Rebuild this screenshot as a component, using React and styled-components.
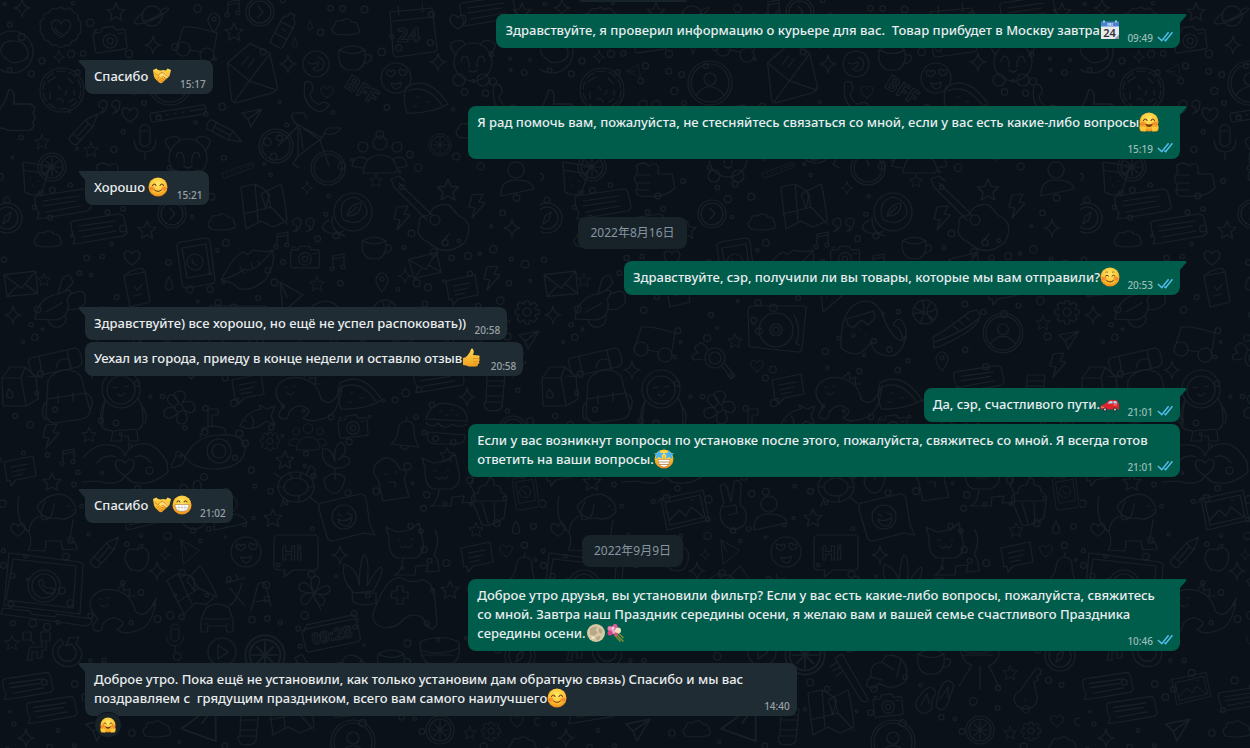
import styled, { createGlobalStyle, css } from 'styled-components';

const GlobalStyle = createGlobalStyle`
  body {
    margin: 0;
    background: #0a1118;
  }
`;

/* ---------- wallpaper ---------- */

const doodleShapes = {
  star: <path d="M0-9 2.6-3 9-2.5 4.2 1.8 5.6 8.3 0 5-5.6 8.3-4.2 1.8-9-2.5-2.6-3Z" />,
  sparkle: <path d="M0-9Q1-1 8 0 1 1 0 9-1 1-8 0-1-1 0-9Z" />,
  heart: <path d="M0 7C-12 0-8-8-3.500-7-1-6.500 0-4 0-4S1-6.500 3.500-7C8-8 12 0 0 7Z" />,
  drop: <path d="M0-7Q-7 5 0 6 7 5 0-7Z" />,
  badge: (
    <>
      <path d="M0-21q4 4 7 1 4 0 6 5 5 0 4 6 5 3 2 8 3 5-2 8 0 6-6 6-2 6-7 4-4 5-8 0-6 2-8-4-6 0-6-6-5-3-2-8-3-5 2-8 0-6 6-6 2-6 8-4 1-1 4-2Z" />
      <path d="M0 9C-15 0-9-9-4-8-1-7 0-4 0-4S1-7 4-8C9-9 15 0 0 9ZM-6 0q2 5 7 6" />
    </>
  ),
  saturn: (
    <>
      <circle r="10" />
      <path d="M-9-3C-27 10-14 10 0 4 15-2 24-13 9-6M-8 5Q2 3 9-3" />
    </>
  ),
  camera: (
    <>
      <path d="M-14-9h6l2-4H5l2 4h7q2 0 2 2V9q0 2-2 2h-28q-2 0-2-2V-7q0-2 2-2Z" />
      <circle r="7" cy="1" /><circle r="3" cy="1" /><path d="M9-5h4M-14-10v-2h3" />
    </>
  ),
  helmet: (
    <>
      <circle r="21" /><path d="M-4 8Q-13 2-11-4-9-12 2-11 14-11 16 0 17 8 7 10-1 12-4 8Z" />
    </>
  ),
  pin: <path d="M0 10Q-7 1-6-3-4-9 0-9T6-3Q7 1 0 10ZM0-5a2 2 0 1 0 .1 0Z" />,
  music: <path d="M-5 5V-6L6-8V3M-5-3 6-5M-7 5a2 2 0 1 0 2 0ZM4 3a2 2 0 1 0 2 0Z" />,
  clock: (
    <>
      <circle r="14" /><circle r="11" /><path d="M-2-6 3 0-2 5" />
    </>
  ),
  bottle: <path d="M-7-8Q-7-13-3-14V-18H3v4Q7-13 7-8V15Q7 18 4 18H-4Q-7 18-7 15ZM-7-6H7M-7 7H7M-2 0h4" />,
  cloud: <path d="M-11 7Q-17 2-11-2-11-8-4-6 1-11 6-5 12-5 12 0 16 6 9 7 0 9-11 7Z" />,
  calendar: (
    <>
      <path d="M-22-18 20-22 25 18Q25 22 20 22L-15 27Q-19 27-19 22ZM-14-24l1 9M10-27l1 9M-19-9 22-13" />
      <text x="-15" y="12">24</text>
    </>
  ),
  cup: <path d="M-14-8q14-8 26 0-12 7-26 0Q-16 9-5 12H4Q14 8 12-8M12-3Q20-5 18 2 15 6 10 5" />,
  glasses: <path d="M-14 0a7 7 0 1 0 .1 0ZM10 6a7 7 0 1 0 .1 0ZM-20 5-14-14Q-10-18 20-9L17 8M-8 8 4 10" />,
  letter: <path d="M-19-12 6-28 24-16 27 18Q26 24 20 24L-16 29Q-21 28-20 23ZM-19-12 0 9 24-15M0 9-18 28M0 9 26 22M-5-8 3-16M1-5 8-12" />,
  moon: (
    <>
      <circle r="13" /><path d="M2-7Q11-4 6 5 0 9-3 5 4 2 2-2-5 2-8-2" />
    </>
  ),
  heartFace: (
    <>
      <circle r="15" /><path d="M-5-1q-7-3-4-7 3 0 4 2 2-3 4-1 1 3-4 6ZM6-2q-5-4-2-7 3 0 3 2 3-2 4 0 0 4-5 5ZM-5 5q5 2 10-1 0 7-5 7-4-1-5-6Z" />
    </>
  ),
  phone: <path d="M-11-15Q-3-18-3-7-8-4-4 2T4 7Q8 3 13 8 8 16 1 14-15 7-11-15Z" />,
  bff: <text x="-22" y="0" transform="rotate(32)">BFF</text>,
  hi: (
    <>
      <path d="M-17-18H18Q22-18 22-14V13Q22 17 18 17H-3L-12 24-11 17H-17Q-22 17-22 13V-14Q-22-18-17-18Z" />
      <text x="-15" y="7">Hi</text>
    </>
  ),
  cookie: (
    <>
      <circle r="22" /><path d="M-14-8q5-4 8-5M6-12l5 5M-12 2v7M-4-4l3 4M5 0l-2 5M12 0v5M-5 10q4-4 6 2M7 12l5-3" />
      <circle r="19" strokeDasharray="8 4" />
    </>
  ),
  quotes: <path d="M-3-4q-5-4-8 1-1 5 4 5 0 5-4 6 8-1 8-12ZM10-4q-5-4-8 1-1 5 4 5 0 5-4 6 8-1 8-12Z" />,
  bar: <path d="M-26-4H26Q28-4 28 0T26 5H-26Q-28 5-28 0T-26-4ZM-20 0h2M-12 0h2M-4 0h2M4 0h2M12 0H26" />,
  pencil: <path d="M-5 17V-8L0-20 5-8V17Q0 20-5 17ZM-5-8Q0-6 5-8M-5 11H5M0-6V9" />,
  mic: <path d="M-5-13q5-7 10 0V2Q0 9-5 2ZM-11-1q1 12 11 12T11-1M0 11v8M-3-10h6" />,
  plane: <path d="M-10-5 10-9-1 9-4 1ZM-4 1 10-9" />,
  bike: (
    <>
      <circle cx="-24" cy="-2" r="17" /><circle cx="-24" cy="-2" r="14" />
      <circle cx="28" cy="20" r="17" /><circle cx="28" cy="20" r="14" />
      <path d="M-22-2-2-22Q-13-34-5-35 6-37 6-30M-2-24-2 8 22-10-3-24M3-20 20-8 29 18M22-10 27-20h14q-4 8-16 6M-2 8l-5 8 6 4M3 1 0-20" />
    </>
  ),
  people: (
    <>
      <circle r="7" cy="-12" /><circle r="5" cx="-17" cy="-8" /><circle r="5" cx="17" cy="-8" />
      <path d="M-17 18Q-15 0 0 0T17 15L15 18ZM-13 4Q-25-2-28 11L-18 13M13 4Q25-2 27 11L18 13" />
    </>
  ),
  person: <path d="M0-18a8 8 0 1 0 .1 0ZM-15 16Q-16 0 0 0T18 9Z" />,
  glass: <path d="M-11-14 16-10 8 16Q0 22-9 16ZM-11-6 14-2M-4 2h1M4 5h1M-2 10h1" />,
  citrus: (
    <>
      <circle r="14" /><circle r="11" /><path d="M0-9V9M-9 0H9M-6-6 6 6M6-6-6 6" />
    </>
  ),
  thumb: <path d="M-15 1q6-6 9-18 6 0 4 12H12q6 3 2 8 4 4 0 7 2 5-3 7H-6q-4-2-9-2Z" />,
  fist: <path d="M-17-12q7-6 13 0 5-5 9 0L5-4h14L22 10Q12 20-4 18-17 20-17 12-14 9-17 5T-17-3-17-12ZM-17-3H-3M-17 5H-3M-16 12H-4" />,
  panda: (
    <>
      <circle r="19" cy="2" /><path d="M-17-5q-11-12 0-14 8-2 9 4M17-5q10-12 0-14-8-2-9 4M-12 2q1-8 6-5 3 6 2 10M12 2q-1-8-6-5-3 6-2 10M-4 10q4 4 8 0" />
      <circle cx="-14" cy="20" r="6" /><circle cx="10" cy="20" r="6" />
    </>
  ),
  map: <path d="M-22-17-8-20 4-13 18-20Q22-5 24 17L10 23-2 17-17 25Q-20 4-22-17ZM-8-20-5 17M4-13 8 4M-20 10 8 3 24 20M0-5a4 4 0 1 1 5 0L3 5Z" />,
  flower: (
    <>
      <path d="M0-5Q-10-16 1-17 11-15 3-5 15-10 16 0 14 8 5 2 12 14 3 16-5 16-1 5-12 15-15 6-16-2-4 0-16-8-9-13-3-14 0-5Z" /><circle r="4" />
    </>
  ),
  rose: (
    <>
      <circle r="19" /><path d="M-11 4Q-15-11 0-15 14-12 14 2 8 12-3 10-12 8-11 4ZM-6 4Q-4-8 8-9 8 4-6 4ZM-6 4 4-5M-21 5Q-22 20-8 24M-24 8q-12 7-2 12 10 4 16-1" />
    </>
  ),
  guitar: <path d="M-39-29-6 4M-34-33-1-1M-39-29-42-37-34-40-28-35M-14 10Q-15-2-5 0 2-14 16-11 23-3 26 0 42 7 32 26 13 43-5 26-18 20-14 10M2 9a5 5 0 1 1 .1 0ZM9 26l7-8" />,
  bolt: <path d="M-5-11 6-12 2-4 8-3-5 12-2 2-8 1Z" />,
  compass: (
    <>
      <circle r="15" /><circle r="11" /><circle r="3" cy="-18" /><path d="M4-6 2 2-4 6-2-2Z" />
    </>
  ),
  lines: <path d="M-25-9 21-16Q25-16 26-12L29 1Q29 5 25 6L-17 13-25 14-23 8Q-26 5-27-5-28-8-25-9ZM-19-4 17-9M-19 1 14-4M-16 7 18 1" />,
  mobile: (
    <>
      <path d="M-14-20 10-24Q14-24 15-20L20 18Q20 22 16 22L-8 26Q-12 26-13 22L-18-16Q-18-19-14-20ZM-13-14 11-18 15 12-8 16Z" /><circle r="8" /><path d="M-3-3q0 5 5 6" />
    </>
  ),
  lips: <path d="M-27 10Q-12-18-4-18 0-13 5-20 18-17 25-20 28-5 17 10 2 23-10 18-15 12-27 10ZM-27 10Q-12 6-4-1 5 5 25-20M-8-3-4 3M3-7l2 6M10-9l2 4" />,
  envelope: <path d="M-17-6 14-14 19 8-11 15ZM-17-6 2 5 14-14M-11 15-2 3M19 8 5 0" />,
  rocket: <path d="M-23 14Q-20-8 0-11L10-15Q16-13 9-6 14 11-2 15ZM-12 7 4-2M0-11 4-26Q12-35 15-22L7-14M11-10Q30-20 27-2 20 7 9 4M-10 15a9 9 0 1 0 18-4" />,
  card: <path d="M-12-14 9-18 14 12-6 17ZM-12-14Q-6-20 6-22L9-18M-2-4 1 0 6-5M-2 6 6 4" />,
  triangle: <path d="M-11-15 12-2-8 15ZM-11-15-4 0" />,
  backpack: <path d="M-18-13Q-11-25 2-24 16-23 17-10L24 16Q23 24 16 25L-12 29Q-18 28-20 22ZM-19 5 20-1M-8 1v8M7-1v8M-19 8q-7 4-3 17h5M20-1q9 4 5 16M-10-26q2-12 13-8l2 9" />,
  bedroll: <path d="M-24-2 20-12Q25-12 27 1 27 5 23 7L-20 16Q-24 14-26 4-27-2-24-2ZM-16-4-13 13M12-9l4 17" />,
  milk: <path d="M-15-7-7-18H8L19-8 21 14 9 21H-14ZM-15-7H4L9 20M4-7 8-18M-8 4q-5 9 1 9 7-1-1-9ZM10-9l10 1" />,
  astronaut: (
    <>
      <circle r="19" cy="-11" /><circle r="14" cy="-10" />
      <path d="M-8-12l5-1M3-13l5-1M-3-6q4 4 7-1M-16 0-20 26Q-15 31-8 31L18 29Q24 27 21 6L17-2M-17 3q-6 12-1 22M20 5q8 9 4 19M-8 31l-2 10h10l1-5h6l1 5h9l-1-10" />
    </>
  ),
  submarine: (
    <>
      <path d="M-31 6Q-20-16 4-16 31-18 29 1 24 18-3 18-22 18-31 6ZM-31 6q-10-12-9 0-9 13 0 10 9-2 9-10ZM-16-14-13-23Q0-27 9-22L10-16M-8-24v-18h10v6h-6v12" />
      <circle r="12" cx="3" /><circle r="7" cx="3" />
    </>
  ),
  fish: <path d="M-17 8Q-10-7 4-9L2-13 10-9 18-12 14-2 18 7 9 3Q-4 15-17 8ZM-12 3h2M-6-2Q-1 3-5 9" />,
  note: <path d="M-16-9 13-15 16 5-4 9-9 15-10 9-13 10ZM-9-4 8-7M-8 1 6-2M-7 5 3 3" />,
  dino: <path d="M-24 15Q-37 2-29-8-19-18-4-13 10-9 13 7 24 18 34-6 31 24 14 27 2 31-5 26 5 19-2 16-10 10-19 20-20 31-29 25-30 20-24 15ZM-23-5h2M-15-6h2M-21 1q4 4 7-1M-4-15l5-5 1 7 6-2-1 7 6 0" />,
  pizza: <path d="M-20-11Q2-24 22 6 5 16-19 15-24 0-20-11ZM-18-7Q0-15 16 7M-9-1h2M0 4h3M-12 8h3" />,
  gear: (
    <>
      <path d="M-2-11h4l1 4 4-3 3 3-2 4 4 1v4l-4 1 2 4-3 3-4-2-1 4h-4l-1-4-4 2-3-3 2-4-4-1v-4l4-1-2-4 3-3 4 2Z" /><circle r="4" />
    </>
  ),
  bell: <path d="M-14 8Q-8 3-7-5-6-15 2-15 10-14 9-5 9 3 14 11ZM-5 9q4 9 9 1M1-15l1-4" />,
  hands: <path d="M-42-8Q-34-19-23-21-4-23 0-10 5-24 24-22 35-17 42-4L43 6Q27 21 7 16-1 10 0 10-6 21-29 15L-43 16M0 10Q-12 3-9-5-4-8 0-3 6-10 9-4 10 4 0 10ZM-28-3Q-20-13-9-9M26-3Q19-13 10-9" />,
  turtle: (
    <>
      <ellipse rx="18" ry="15" /><ellipse rx="12" ry="9" /><path d="M-15-9-22-14M10-12 14-21Q22-20 17-9M14 10l7 6M-12 11-15 19M-4-9-7-15M4-9 5-15M12 0h6M-12 0h-6M3 9v6" />
    </>
  ),
  plant: <path d="M0 6Q-15 2-12-14-2-13 0 0-2-16 6-20 16-12 3-2M3-2Q13-10 15 0 10 7 0 6V18M-11 17Q0 7 10 16 7 32-2 31-11 28-11 17Z" />,
  toast: <path d="M-12-17Q0-28 10-10 20-9 14 0L19 18-7 22-12 0Q-21-8-12-17ZM-5-5h2M5-7h2M-2 3h7v5" />,
  burger: <path d="M-21-5Q-15-24 3-20 21-17 20-3ZM-21-1q7 6 12 0 7 8 14 1 7 5 15 0M-19 8l37 3M-19 8Q-22 20-10 20H8Q19 20 18 11M-7-13h2M4-14h2M9-9h2M-1-9h2" />,
  sock: <path d="M-8-18H10L7 13Q5 20-8 17Q-13 12-9 8ZM-8-12H9M-8-7H9M-9 3H8M-10 9H7" />,
  turntable: (
    <>
      <path d="M-24-24H28Q31-24 30-20L26 18Q26 22 22 22L-24 17Q-28 17-27 13L-28-19Q-28-24-24-24Z" /><circle r="17" /><circle r="6" /><circle r="3" /><path d="M18-15q8 16 2 28l3 2M-23-12h2M-23-5h2" />
    </>
  ),
  magnifier: (
    <>
      <circle r="10" /><circle r="6" /><path d="M7 8 16 21 20 18 10 6M-7-8q-6-11-10-5-6 1 0 8-9 2-4 7l8-1" />
    </>
  ),
  ghost: <path d="M-22 28Q-23-5-9-15 8-25 18-9 28 20 40 21 39 8 30 5 37-8 43 9 44 28 30 36 10 36 8 22-4 42-22 28ZM-17-1 11-9 12-2 5 5-1 0-5 3-10 8-15 5ZM-4 10h1M2 14h1" />,
  ball: (
    <>
      <circle r="12" /><path d="M-11-5Q0 4 11-3M-3-12Q2 0-5 11M6-10Q-2 0 7 9M-12 2Q0-2 9 8" />
    </>
  ),
  shoe: <path d="M-24 9Q-12 3 12-16L20-18 23-12Q22 1-16 18L-23 20ZM-22 14Q10 2 22-10M-4-2l5 4M2-7l5 4M8-12l4 4" />,
  user: (
    <>
      <circle r="22" /><circle r="19" /><circle r="6" cy="-4" /><path d="M-14 12Q0-5 14 12" />
    </>
  ),
  dog: <path d="M-18-14Q-4-29 9-25 21-20 21-8 12 2 1-2-14 0-18-14ZM-10-18Q-17-5-12 0-3 0-2-10L-1-16M13-14h2M17-10h2M-16-4Q-25 0-26 12-22 24-27 30L-10 31-9 21H6L8 30 22 29Q22 22 15 20L18 0M-26 12Q-41 1-36-24" />,
  apple: <path d="M0-8Q-12-12-12 1-8 14-2 12 4 15 9 8 15-6 7-10 3-10 0-8ZM0-8Q2-14 6-14 6-10 0-8" />,
  laugh: (
    <>
      <path d="M-25-17 14-26Q19-26 20-21L24 5 29 15 18 13-13 21Q-18 21-19 17L-27-11Q-28-16-25-17Z" /><circle r="12" cx="-2" cy="-3" /><path d="M-8-6l4 2M1-7l5 2M-8-1q7 4 14-2-1 10-7 9-6-1-7-7Z" />
    </>
  ),
  cat: <path d="M-17-12-20-22-9-17 4-19 13-26 16-12Q21 4 9 9H-9Q-18 5-17-12ZM-8-9h2M5-10h2M-6-3q3 4 6 0 3 4 6-1M-3 10Q-5 25-12 26H9L10 17 22 16 20 23 33 22Q32 8 28 6 35-9 29-19" />,
  leaves: <path d="M-12 15Q-25 2-22-14-8-9-7 7-6-18-2-23 4-20 1 8 10-9 15-11 19-7 7 13L-12 15ZM-14 15H10V25Q-2 29-13 24Z" />,
  laptop: (
    <>
      <path d="M-35-39 36-30Q40-29 39-25L36 22-40 13ZM-31-33 32-26 29 16-38 8ZM-41 16-14 19-13 22 11 25 13 22 48 27Q48 33 42 34L-43 22Z" />
      <circle r="16" cy="-6" /><circle r="12" cy="-6" /><path d="M-5-11q3-3 5 2-3 4 5 5 6-1 5 4-5 4-11-2-5-5-4-9Z" />
    </>
  ),
  glyphs: <path d="M-24-11-5-16M-14-20l2 6M-20-6Q-8 9-5 12M-8-11Q-14 10-21 11M1 17 8-10Q13-14 16-8L21 12M5 8 17 6" />,
  clover: <path d="M0 0Q-19 0-14-9-7-14 0 0-7-17 3-17 9-13 0 0 16-13 16-3 14 4 0 0 15 4 9 12 1 13 0 0-9 18-13 8-14 0 0 0M0 3l7 14" />,
  pad: <path d="M-29 5Q-16-31-2-28 9-22 17-26 30-27 32-6L34 18Q28 30 20 12 11 6 2 12-8 24-21 21-33 17-29 5ZM-11-15h5v-5h6v6h5v6H0v6h-6v-6h-6Z" />,
  car: <path d="M-16 12V0L-11-12Q0-20 12-12L16 0V12H10L9 6H-9L-10 12ZM-13-1H13M-12 4h3M9 4h3" />,
  digital: (
    <>
      <path d="M-24-10H24Q28-10 28-6V9Q28 13 24 13H-24Q-28 13-28 9V-6Q-28-10-24-10ZM-26-8-22-14H26L30-8" />
      <text x="-20" y="7" fontSize="16">09:28</text>
    </>
  ),
  play: (
    <>
      <circle r="14" /><path d="M-4-7 6 0-4 7Z" />
    </>
  ),
  blocks: <path d="M-14-14h8v8h-8ZM4-14h9v9H4ZM-7 1H5V-5h4v9h-4v8h-5V6h-5v8h-5ZM-7-7l4 5" />,
  refresh: <path d="M9-8 12-15 2-14-1-6 4-8Q12-2 8 6 0 13-7 6-13-4-3-8L-6-13Q-19-5-12 8-2 19 10 12 20 2 9-8Z" />,
  cupcake: <path d="M-16-2Q-18-9-10-10-10-18-2-18L2-26Q7-23 6-18 14-18 13-11 20-9 18-2ZM-15 0-6 22Q3 24 16 15L18-1M-6 0 0 20M6 0 7 18" />,
  photo: <path d="M-22-13 20-22 26 8-16 18ZM-26-9-22-14M-18-9 17-17 22 5-13 13ZM-14 9-4-2 3 4 8-5 21 5M8-12h3" />,
  victory: <path d="M-9-7-13-23Q-10-29-6-23L-2-8 1-28Q6-32 8-26L7-5Q16 0 12 14 2 24-9 15-17 4-9-7ZM-9-3 3-5 4 3-4 5" />,
  grill: <path d="M-20-18Q0-27 19-18 22 0 9 6L19 27M-20-18Q-20 2-8 5L-21 26M0 6V29M-20-10Q0-3 19-12M-18-5 12-5" />,
  flipflops: <path d="M-16-4Q-4-21 1-8-5 0-3 8-11 16-17 9-22 4-16-4ZM3-6Q10-28 19-16 15-4 13 2 7 14 1 5ZM-14 4-8-7-6 3M5-2 13-14 13-3" />,
  key: <path d="M-8-1 6-21Q10-25 13-22L13-18 9-16 10-12 6-10 8 0Q12 12 2 16-10 20-14 8-13 0-8-1ZM-4 8h2" />,
  brush: <path d="M-17-24-10-28 16 17Q15 22 9 18ZM-15-20-22-15M-12-15-19-11M-9-11-16-6" />,
  croissant: <path d="M-19 15Q-23 10-16 5-18-9-5-10 0-22 14-13 23-3 18 10 4 20-8 11-10 18-19 15ZM-16 5-5 8M-5-10 7-2M14-13 10 5" />,
};

// shape, x, y, scale, rotation
const doodles = [
  ['sparkle', 22, 8], ['star', 116, 12], ['badge', 61, 28], ['saturn', 152, 16], ['camera', 110, 40, 1, -8],
  ['helmet', 12, 52], ['sparkle', 153, 45], ['sparkle', 59, 57, 0.7], ['pin', 214, 22], ['music', 233, 8],
  ['clock', 260, 12], ['star', 234, 32], ['bottle', 284, 30, 1, 28], ['drop', 310, 26, 0.7], ['cloud', 346, 27],
  ['drop', 295, 43, 0.7], ['calendar', 412, 30], ['cup', 353, 58], ['glasses', 197, 42], ['letter', 248, 72, 1, -8],
  ['sparkle', 288, 64], ['moon', 316, 64], ['heartFace', 396, 78], ['phone', 316, 97], ['heart', 327, 92, 0.8],
  ['bff', 362, 98], ['cookie', 62, 90], ['quotes', 110, 106], ['heart', 130, 115], ['bar', 178, 113, 1, -9],
  ['pencil', 84, 129, 1, 42], ['mic', 145, 141], ['pencil', 224, 132, 1, 118], ['plane', 252, 118], ['bike', 300, 148],
  ['people', 380, 155], ['star', 42, 142, 0.8], ['star', 91, 150, 0.8], ['glass', 34, 176], ['citrus', 52, 167],
  ['fist', 113, 178], ['panda', 188, 156], ['bar', 238, 170, 0.6, -20], ['map', 263, 204], ['star', 376, 181, 0.7],
  ['sparkle', 307, 188, 0.7], ['rose', 353, 212], ['guitar', 433, 216], ['compass', 7, 218], ['lines', 62, 205],
  ['lines', 98, 230], ['clock', 172, 214], ['cloud', 222, 222], ['star', 147, 230], ['quotes', 304, 224],
  ['cloud', 48, 239], ['music', 282, 240], ['cup', 375, 248, 0.9], ['user', 170, 83], ['triangle', 96, 70, 0.5, -60],
  ['thumb', 16, 110, 1.2], ['lines', 487, 12], ['star', 522, 12], ['panda', 473, 60], ['pizza', 426, 98],
  ['star', 448, 190, 1.2], ['bolt', 477, 206], ['person', 516, 180], ['heart', 458, 22],
  ['sparkle', 438, 62], ['phone', 505, 100], ['cloud', 470, 130], ['citrus', 440, 145, 0.8], ['star', 522, 140],
  ['bolt', 402, 218], ['mobile', 195, 262], ['sparkle', 512, 228], ['heart', 132, 258], ['lips', 248, 270],
  ['camera', 305, 258, 0.9], ['envelope', 20, 283, 1, 8], ['rocket', 58, 305], ['card', 136, 290], ['star', 44, 280, 0.7],
  ['triangle', 291, 297], ['star', 317, 284, 0.8], ['pin', 382, 282], ['sparkle', 13, 315], ['drop', 169, 284],
  ['music', 338, 262], ['envelope', 424, 265, 0.9], ['sparkle', 405, 276, 0.8], ['bedroll', 55, 360], ['backpack', 66, 394],
  ['milk', 17, 385], ['astronaut', 121, 400], ['flower', 179, 408], ['submarine', 216, 451], ['fish', 257, 418],
  ['note', 248, 389], ['dino', 308, 392], ['pizza', 360, 394], ['people', 308, 437, 0.7], ['gear', 270, 441, 0.8],
  ['camera', 353, 427, 0.9, -6], ['bell', 405, 436], ['hands', 125, 466], ['bolt', 51, 436], ['star', 89, 435, 0.8],
  ['star', 52, 482], ['note', 20, 471], ['music', 68, 457], ['turtle', 296, 487], ['star', 285, 460],
  ['plant', 335, 462], ['toast', 390, 479], ['burger', 447, 424], ['sock', 495, 393], ['gear', 527, 312],
  ['note', 462, 290], ['bolt', 492, 278], ['turntable', 236, 330], ['magnifier', 175, 358], ['glasses', 115, 342],
  ['star', 195, 341, 0.8], ['heart', 217, 366, 0.8], ['sparkle', 92, 370], ['ghost', 323, 320], ['ball', 385, 312],
  ['shoe', 417, 328], ['user', 463, 333, 0.9], ['star', 503, 323, 0.8], ['pin', 402, 361], ['plane', 529, 340],
  ['lines', 438, 380, 0.9], ['sparkle', 467, 397], ['bolt', 518, 365], ['cat', 442, 480], ['star', 447, 455, 0.8],
  ['heart', 500, 452], ['clock', 513, 430], ['dog', 55, 520], ['heart', 18, 530, 0.9], ['pencil', 105, 552, 1, 42],
  ['apple', 137, 558], ['triangle', 190, 552, 0.8], ['heartFace', 246, 552], ['laugh', 346, 520], ['hi', 296, 553],
  ['cat', 406, 549], ['leaves', 366, 578], ['laptop', 44, 592], ['dino', 122, 604], ['map', 191, 588, 0.9, -20],
  ['glyphs', 250, 594], ['clover', 314, 593], ['pad', 403, 606], ['car', 217, 620], ['digital', 331, 634, 1, -12],
  ['mic', 175, 637, 0.8], ['play', 222, 652], ['citrus', 265, 655, 1.4], ['star', 12, 643, 0.8], ['blocks', 37, 646],
  ['refresh', 67, 652], ['lines', 27, 687, 0.9], ['lines', 51, 711, 0.9], ['cloud', 157, 729], ['sparkle', 26, 738],
  ['cupcake', 488, 503], ['photo', 143, 512], ['victory', 193, 510], ['person', 229, 514], ['mobile', 525, 492, 0.7],
  ['star', 476, 530, 0.8], ['heart', 506, 551, 0.8], ['drop', 516, 528], ['note', 477, 557], ['bell', 523, 572],
  ['sparkle', 340, 555], ['sparkle', 157, 571], ['star', 273, 518], ['croissant', 347, 672], ['cup', 392, 662],
  ['grill', 440, 660], ['camera', 348, 706, 0.9, -6], ['flipflops', 395, 701], ['key', 488, 692], ['user', 353, 742],
  ['citrus', 440, 730], ['star', 470, 733, 0.7], ['gear', 491, 731, 0.8], ['brush', 312, 682], ['compass', 520, 656],
  ['star', 470, 673, 0.8], ['sock', 249, 727], ['triangle', 205, 728, 1.4, 60], ['lines', 160, 700, 0.8],
  ['plane', 98, 730, 1.2], ['bottle', 480, 610], ['cloud', 505, 625], ['star', 450, 590], ['map', 290, 710],
  ['heart', 517, 721, 0.8], ['photo', 110, 690, 0.8], ['sparkle', 165, 555, 0.6], ['cloud', 523, 745],
];

const TILE = { width: 540, height: 749 };

// Loose dots that fill the gaps between the larger drawings
const dots = (() => {
  const found = [];
  let seed = 17;
  const next = () => {
    seed = (seed * 16807) % 2147483647;
    return seed / 2147483647;
  };
  for (let i = 0; i < 2600 && found.length < 380; i += 1) {
    const dot = { x: next() * TILE.width, y: next() * TILE.height, r: 1.2 + next() * 2.6 };
    const clear = doodles.every(([, x, y, scale = 1]) => Math.hypot(dot.x - x, dot.y - y) > 17 * scale);
    const apart = found.every((d) => Math.hypot(dot.x - d.x, dot.y - d.y) > 11);
    if (clear && apart) found.push(dot);
  }
  return found;
})();

const Doodles = () => (
  <WallpaperSvg aria-hidden="true">
    <defs>
      <pattern id="doodles" width={TILE.width} height={TILE.height} patternUnits="userSpaceOnUse">
        {doodles.map(([shape, x, y, scale = 1, turn = 0], i) => (
          <g key={i} transform={`translate(${x} ${y}) rotate(${turn}) scale(${scale})`}>
            {doodleShapes[shape]}
          </g>
        ))}
        {dots.map((dot, i) => (
          <circle key={i} cx={dot.x} cy={dot.y} r={dot.r} />
        ))}
      </pattern>
    </defs>
    <rect width="100%" height="100%" fill="url(#doodles)" stroke="none" />
  </WallpaperSvg>
);

/* ---------- emoji ---------- */

const smile = <path d="M13 26q7 6 14 0" fill="none" stroke="#6b3a10" strokeWidth="2" strokeLinecap="round" />;
const closedEyes = (
  <path d="M9 17q4-6 7 0M24 17q4-6 7 0" fill="none" stroke="#6b3a10" strokeWidth="2.200" strokeLinecap="round" />
);
const cheeks = (
  <g fill="#f4642a" opacity="0.55">
    <ellipse cx="8" cy="23" rx="5" ry="4" />
    <ellipse cx="32" cy="23" rx="5" ry="4" />
  </g>
);
const face = <circle cx="20" cy="20" r="19" fill="url(#face)" />;

const emojiArt = {
  calendar: (
    <>
      <path d="M2 4h36v34H2Z" fill="#e8e9ec" />
      <path d="M2 3h36v10H2Z" fill="#4a80d0" />
      <path d="M8 1v4M32 1v4" stroke="#dfe6f0" strokeWidth="3" />
      <path d="M38 29v9h-9Z" fill="#9b9ca3" />
      <text x="20" y="11" textAnchor="middle" fontSize="7" fontWeight="700" fill="#e4efff">FRI</text>
      <text x="19" y="33" textAnchor="middle" fontSize="22" fontWeight="600" fill="#303238">24</text>
    </>
  ),
  handshake: (
    <>
      <path d="M2 8 9 5l3 3 6 1 4-1 6 1 3-4 7 3-3 12-5 4-10 10q-3 1-6-1l-8-8-2-4Z" fill="url(#hand)" />
      <path d="M12 20 17 14l8-2 8 9-3 4-8-6-6 3Z" fill="#ffdc78" />
      <path d="M12 20l6-7 6 1 8 9M11 25l4-4M14 29l4-4M18 32l3-4M23 21l6 6M20 24l6 6M5 14l6 5" fill="none" stroke="#c87914" strokeWidth="1.500" />
    </>
  ),
  blush: <>{face}{cheeks}{closedEyes}{smile}</>,
  hug: (
    <>
      {face}{cheeks}{closedEyes}
      <path d="M12 23q8 4 16 0-2 7-8 7t-8-7Z" fill="#7b3a12" />
      <path d="M3 38Q-1 30 3 25l3 5 1-6 4 6 2-4 3 6-3 7ZM37 38q4-8 0-13l-3 5-1-6-4 6-2-4-3 6 3 7Z" fill="#ffc93c" stroke="#dd8615" />
    </>
  ),
  relaxed: (
    <>
      {face}{cheeks}
      <path d="M11 11q3-3 5 0M24 11q3-3 5 0" fill="none" stroke="#8c5013" strokeWidth="1.500" />
      <path d="M11 18q3-4 6 0M24 18q3-4 6 0M13 27q7 6 14 0" fill="none" stroke="#6b3a10" strokeWidth="2" strokeLinecap="round" />
    </>
  ),
  thumbsUp: (
    <>
      <path d="M2 20q6-1 9-5 6-6 7-13 2-2 4 0 3 5 0 12l12 1q3 3 0 6 3 3 0 6 2 4-2 5 0 5-5 5H14Q8 34 2 34Z" fill="url(#hand)" />
      <path d="M22 21h13M22 27h12M22 32h10" fill="none" stroke="#dc8a19" strokeWidth="1.500" />
    </>
  ),
  car: (
    <>
      <path d="M1 25q2-4 10-6l6-6q10-3 17 0l4 7v11H2Z" fill="#dc242c" />
      <path d="M15 19l5-5h5v5ZM27 14h5l3 5h-8Z" fill="#a8dcf4" />
      <path d="M2 26l7 1M27 22h7" stroke="#ff8a80" strokeWidth="2" />
      <circle cx="10" cy="31" r="4" fill="#33343a" /><circle cx="30" cy="31" r="4" fill="#33343a" />
      <circle cx="10" cy="31" r="2" fill="#d5d7dc" /><circle cx="30" cy="31" r="2" fill="#d5d7dc" />
    </>
  ),
  starStruck: (
    <>
      {face}
      <path d="M8 21h24q-1 15-12 15T8 21Z" fill="#fff" stroke="#a0612a" />
      <path d="M9 26h22M11 31h18" stroke="#a7703a" strokeWidth="1.500" />
      <path d="M10 2l3 6 7 0-5 5 2 7-7-4-7 4 2-7-5-5h7ZM30 2l3 6h7l-5 5 2 7-7-4-7 4 2-7-5-5h7Z" fill="#48b3ef" />
      <path d="M20 12v10" stroke="#efad2c" strokeWidth="3" />
    </>
  ),
  beam: (
    <>
      {face}
      <path d="M10 14q3-5 6 0M24 14q3-5 6 0" fill="none" stroke="#6b3a10" strokeWidth="2.200" strokeLinecap="round" />
      <path d="M6 19h28q0 14-14 14T6 19Z" fill="#fff" stroke="#a0612a" />
      <path d="M7 25h26M14 19v13M20 19v14M26 19v13" stroke="#b9aea4" />
    </>
  ),
  moon: (
    <>
      <circle cx="20" cy="20" r="18" fill="#d8c9a5" />
      <path d="M8 12q8-7 15-4l-4 7 5 4-8 7-8-3ZM26 9l7 5-2 8-6-4ZM20 28l9-3-1 7-7 3Z" fill="#a99a7d" opacity="0.7" />
      <circle cx="14" cy="29" r="3" fill="#efe3c4" />
    </>
  ),
  bouquet: (
    <>
      <path d="M18 20l17 17M22 18l13 12M16 23l13 14" stroke="#7d8f35" strokeWidth="3" />
      <circle cx="18" cy="7" r="5" fill="#e75a9b" /><circle cx="8" cy="11" r="5" fill="#f183b6" />
      <circle cx="15" cy="17" r="5" fill="#f3a2c8" /><circle cx="24" cy="15" r="6" fill="#f4ddc0" />
      <circle cx="8" cy="20" r="5" fill="#d9438a" /><circle cx="14" cy="10" r="3" fill="#fbd3e6" />
      <circle cx="20" cy="23" r="4" fill="#c8577f" />
    </>
  ),
};

const Emoji = ({ name, label, small }) => (
  <EmojiSvg viewBox="0 0 40 40" role="img" aria-label={label} $small={small}>
    {emojiArt[name]}
  </EmojiSvg>
);

const EmojiDefs = () => (
  <DefsSvg aria-hidden="true">
    <defs>
      <radialGradient id="face" cx="0.5" cy="0.35" r="0.65">
        <stop offset="0" stopColor="#ffe96a" />
        <stop offset="0.6" stopColor="#fdc636" />
        <stop offset="1" stopColor="#ee8a16" />
      </radialGradient>
      <linearGradient id="hand" x1="0" y1="0" x2="0" y2="1">
        <stop offset="0" stopColor="#ffd94e" />
        <stop offset="1" stopColor="#f2a01f" />
      </linearGradient>
    </defs>
  </DefsSvg>
);

/* ---------- conversation ---------- */

const conversation = [
  { out: true, first: true, time: '09:49', text: 'Здравствуйте, я проверил информацию о курьере для вас.  Товар прибудет в Москву завтра', emoji: [['calendar', 'календарь']] },
  { first: true, time: '15:17', text: 'Спасибо ', emoji: [['handshake', 'рукопожатие']] },
  { out: true, first: true, time: '15:19', text: 'Я рад помочь вам, пожалуйста, не стесняйтесь связаться со мной, если у вас есть какие-либо вопросы', emoji: [['hug', 'объятия']] },
  { first: true, time: '15:21', text: 'Хорошо ', emoji: [['blush', 'улыбка']] },
  { day: '2022年8月16日' },
  { out: true, first: true, time: '20:53', text: 'Здравствуйте, сэр, получили ли вы товары, которые мы вам отправили?', emoji: [['relaxed', 'улыбка']] },
  { first: true, time: '20:58', text: 'Здравствуйте) все хорошо, но ещё не успел распоковать))' },
  { time: '20:58', text: 'Уехал из города, приеду в конце недели и оставлю отзыв', emoji: [['thumbsUp', 'палец вверх']] },
  { out: true, first: true, time: '21:01', text: 'Да, сэр, счастливого пути.', emoji: [['car', 'машина']] },
  { out: true, time: '21:01', text: 'Если у вас возникнут вопросы по установке после этого, пожалуйста, свяжитесь со мной. Я всегда готов ответить на ваши вопросы.', emoji: [['starStruck', 'восторг']] },
  { first: true, time: '21:02', text: 'Спасибо ', emoji: [['handshake', 'рукопожатие'], ['beam', 'широкая улыбка']] },
  { day: '2022年9月9日' },
  { out: true, first: true, time: '10:46', text: 'Доброе утро друзья, вы установили фильтр? Если у вас есть какие-либо вопросы, пожалуйста, свяжитесь со мной. Завтра наш Праздник середины осени, я желаю вам и вашей семье счастливого Праздника середины осени.', emoji: [['moon', 'луна'], ['bouquet', 'букет']] },
  { first: true, time: '14:40', text: 'Доброе утро. Пока ещё не установили, как только установим дам обратную связь) Спасибо и мы вас поздравляем с  грядущим праздником, всего вам самого наилучшего', emoji: [['blush', 'улыбка']], reaction: ['hug', 'объятия'] },
];

const Tail = ({ out }) => (
  <TailSvg viewBox="0 0 8 12" $out={out} aria-hidden="true">
    <path d={out ? 'M0 0H6Q8 0 7 2L0 10Z' : 'M8 0H2Q0 0 1 2L8 10Z'} />
  </TailSvg>
);

const Ticks = () => (
  <TicksSvg viewBox="0 0 16 11" role="img" aria-label="Прочитано">
    <path d="M.8 6 4.800 9.600 11.600 1.200M7.400 8.600 8.600 9.600 15.400 1.200" />
  </TicksSvg>
);

const Message = ({ out, first, time, text, emoji = [], reaction }) => (
  <Row $out={out} $first={first}>
    <Bubble $out={out} $first={first}>
      {first && <Tail out={out} />}
      <MessageText>
        {text}
        {emoji.map(([name, label]) => (
          <Emoji key={name} name={name} label={label} />
        ))}
        <MetaSpace $out={out} />
      </MessageText>
      <Meta $out={out}>
        <time>{time}</time>
        {out && <Ticks />}
      </Meta>
      {reaction && (
        <Reaction type="button">
          <Emoji name={reaction[0]} label={reaction[1]} small />
        </Reaction>
      )}
    </Bubble>
  </Row>
);

const App = () => {
  return (
    <>
      <GlobalStyle />
      <EmojiDefs />
      <Chat>
        <Doodles />
        <HiddenDay />
        <Messages>
          {conversation.map((item, i) =>
            item.day ? (
              <DayRow key={i}>
                <Day>{item.day}</Day>
              </DayRow>
            ) : (
              <Message key={i} {...item} />
            )
          )}
        </Messages>
      </Chat>
    </>
  );
};

const Chat = styled.main`
  position: relative;
  min-height: 100vh;
  box-sizing: border-box;
  overflow: hidden;
  padding: 0 70px 32px 85px;
  color: #e9edef;
  font-family: 'Noto Sans', 'Noto Sans CJK SC', sans-serif;
  font-size: 13px;
  line-height: 19px;
`;

const WallpaperSvg = styled.svg`
  position: absolute;
  top: 0;
  left: 0;
  width: 100%;
  height: 100%;
  fill: none;
  stroke: #182027;
  stroke-width: 1.2;
  stroke-linejoin: round;
  stroke-linecap: round;
  font-size: 20px;
  font-weight: 700;
`;

const DefsSvg = styled.svg`
  position: absolute;
  width: 0;
  height: 0;
`;

/* Bottom edge of the day label that has scrolled out of view */
const HiddenDay = styled.div`
  position: relative;
  width: 108px;
  height: 2px;
  margin: 0 auto;
  border-radius: 0 0 8px 8px;
  background: #182229;
`;

const Messages = styled.ol`
  position: relative;
  display: flex;
  flex-direction: column;
  margin: 0;
  padding: 0;
  list-style: none;
`;

const Row = styled.li`
  display: flex;
  justify-content: ${({ $out }) => ($out ? 'flex-end' : 'flex-start')};
  margin-top: ${({ $first }) => ($first ? '12px' : '2px')};
`;

const Bubble = styled.div`
  position: relative;
  box-sizing: border-box;
  max-width: 65%;
  padding: 7px 7px 7px 9px;
  border-radius: 8px;
  background: ${({ $out }) => ($out ? '#005c4b' : '#202c33')};
  box-shadow: 0 1px 1px rgba(11, 20, 26, 0.2);
  ${({ $first, $out }) =>
    $first &&
    css`
      border-top-${$out ? 'right' : 'left'}-radius: 0;
    `}
`;

const TailSvg = styled.svg`
  position: absolute;
  top: 0;
  ${({ $out }) => ($out ? 'right' : 'left')}: -7px;
  width: 8px;
  height: 12px;
  fill: ${({ $out }) => ($out ? '#005c4b' : '#202c33')};
`;

const MessageText = styled.div`
  padding-right: 4px;
  font-weight: 500;
  white-space: pre-wrap;
  overflow-wrap: break-word;
`;

const EmojiSvg = styled.svg`
  display: inline-block;
  width: ${({ $small }) => ($small ? '16px' : '20px')};
  height: ${({ $small }) => ($small ? '16px' : '20px')};
  margin: ${({ $small }) => ($small ? '0' : '-1px 0 1px')};
  vertical-align: top;
`;

const MetaSpace = styled.span`
  display: inline-block;
  width: ${({ $out }) => ($out ? '49px' : '30px')};
`;

const Meta = styled.div`
  display: flex;
  align-items: center;
  justify-content: flex-end;
  gap: 4px;
  height: 15px;
  margin: -10px 0 -5px;
  font-size: 10px;
  font-weight: 500;
  line-height: 15px;
  color: ${({ $out }) => ($out ? '#99beb7' : '#9aa2a7')};
`;

const TicksSvg = styled.svg`
  width: 16px;
  height: 11px;
  margin-bottom: 4px;
  fill: none;
  stroke: #53bdeb;
  stroke-width: 1.5;
`;

const Reaction = styled.button`
  position: absolute;
  top: calc(100% - 4px);
  left: 9px;
  display: flex;
  align-items: center;
  justify-content: center;
  width: 28px;
  height: 26px;
  padding: 0;
  border: 1px solid #0b141a;
  border-radius: 13px;
  background: #182229;
`;

const DayRow = styled.li`
  display: flex;
  justify-content: center;
  margin-top: 12px;
`;

const Day = styled.span`
  padding: 6px 12px 7px;
  border-radius: 8px;
  background: #182229;
  font-size: 12px;
  color: #8696a0;
`;

export default App;
